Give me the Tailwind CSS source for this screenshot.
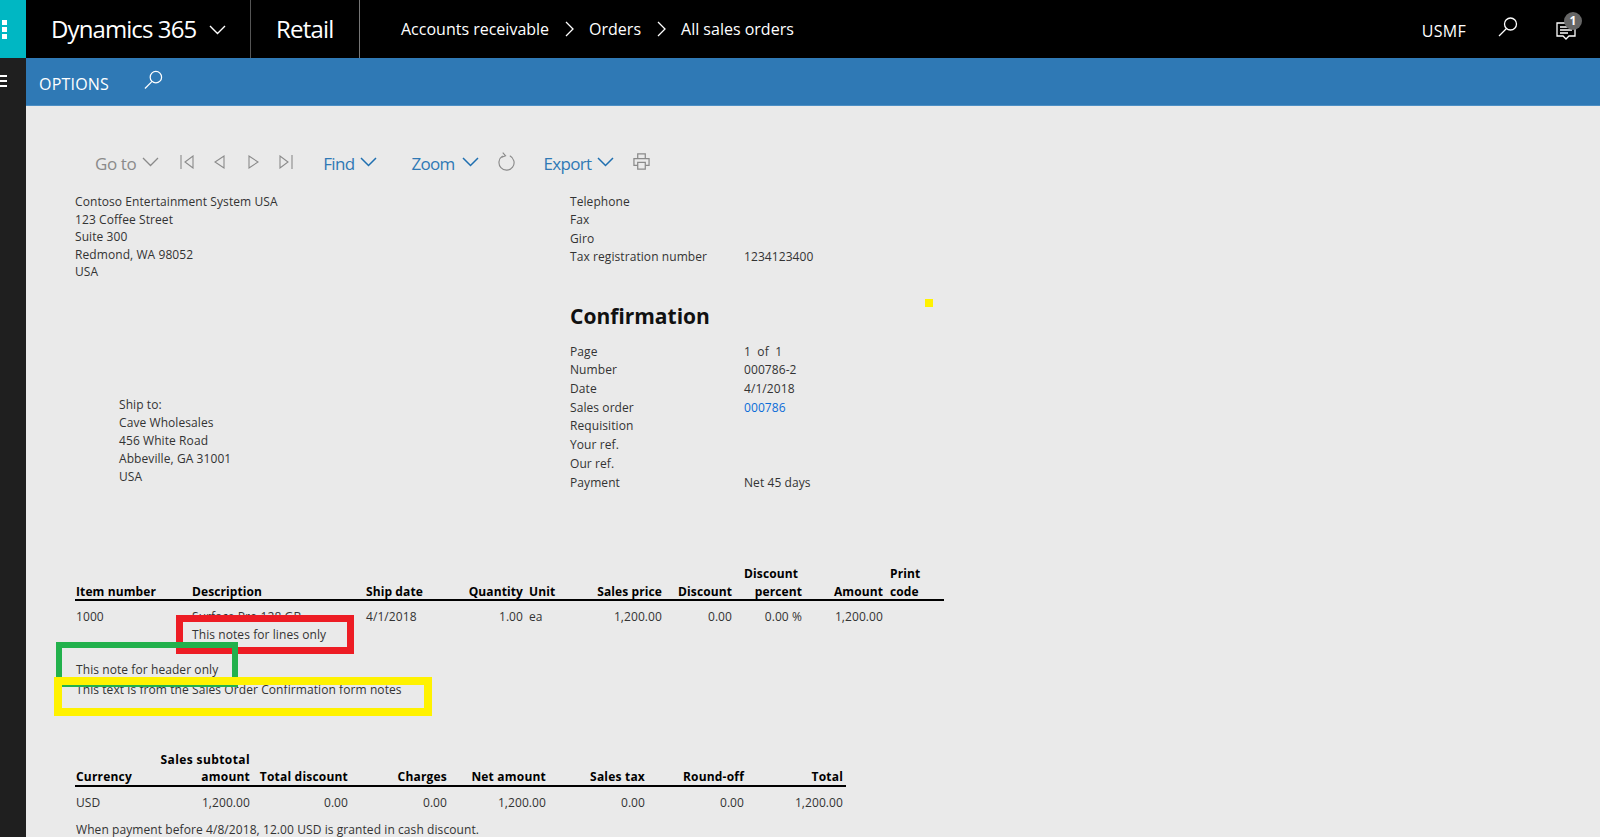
<!DOCTYPE html>
<html lang="en">
<head>
  <meta charset="UTF-8">
  <title>All sales orders</title>
  <script src="https://cdn.jsdelivr.net/npm/@tailwindcss/browser@4"></script>
</head>
<body class="bg-[#eaeaea] font-['Open_Sans',sans-serif] overflow-hidden">
<div class="relative w-[1600px] h-[837px] overflow-hidden flex flex-col">

  <!-- top bar -->
  <header class="h-[58px] bg-black text-white flex items-stretch shrink-0">
    <div class="w-[26px] bg-[#00b7c3] flex flex-col items-end justify-center gap-[2px] pr-[19px] pl-[2px]">
      <span class="w-[5px] h-[5px] bg-white"></span>
      <span class="w-[5px] h-[5px] bg-white"></span>
      <span class="w-[5px] h-[5px] bg-white"></span>
    </div>
    <div class="w-[225px] border-r border-[#555] flex items-center pl-[25px]">
      <span class="text-[24px] tracking-[-0.9px]">Dynamics 365</span>
      <svg class="ml-[13px] mt-[2px]" width="17" height="10" viewBox="0 0 17 10" fill="none" stroke="#fff" stroke-width="1.4"><path d="M1 1l7.500 7.500L16 1"/></svg>
    </div>
    <div class="w-[109px] border-r border-[#777] flex items-center pl-[25px] text-[24px] tracking-[-0.8px]">Retail</div>
    <nav class="flex items-center pl-[41px] text-[16px]">
      <span>Accounts receivable</span>
      <svg class="ml-[16px] mr-[15px]" width="9" height="16" viewBox="0 0 9 16" fill="none" stroke="#fff" stroke-width="1.3"><path d="M1 1l7 7-7 7"/></svg>
      <span>Orders</span>
      <svg class="ml-[16px] mr-[15px]" width="9" height="16" viewBox="0 0 9 16" fill="none" stroke="#fff" stroke-width="1.3"><path d="M1 1l7 7-7 7"/></svg>
      <span>All sales orders</span>
    </nav>
    <div class="ml-auto flex items-center">
      <span class="text-[16px] tracking-[0.3px] mt-[3px]">USMF</span>
      <svg class="ml-[32px] mb-[4px]" width="20" height="20" viewBox="0 0 20 20" fill="none" stroke="#fff" stroke-width="1.3"><circle cx="12.500" cy="7" r="6"/><path d="M8.500 11.500L1 19"/></svg>
      <div class="relative ml-[38px] mr-[24px] w-[20px] h-[20px] mt-[4px]">
        <svg width="20" height="20" viewBox="0 0 20 20" fill="none" stroke="#fff" stroke-width="1.3"><path d="M1 2h18v13h-6l-3 3-3-3H1z"/><path d="M4 6h12M4 9h12M4 12h8"/></svg>
        <span class="absolute -top-[9px] left-[8px] w-[18px] h-[18px] rounded-full bg-[#666] text-white text-[12px] font-bold flex items-center justify-center">1</span>
      </div>
    </div>
  </header>

  <div class="flex flex-1 min-h-0">
    <!-- left rail -->
    <aside class="w-[26px] bg-[#1f1f1f] shrink-0 flex flex-col gap-[3px] pt-[17px]">
      <span class="w-[7px] h-[2px] bg-white"></span>
      <span class="w-[7px] h-[2px] bg-white"></span>
      <span class="w-[7px] h-[2px] bg-white"></span>
    </aside>

    <main class="flex-1 min-w-0">
      <!-- action pane -->
      <div class="h-[48px] bg-[#2f79b5] border-b border-[#4d8fc4] text-white flex items-center pl-[13px]">
        <span class="text-[16px] tracking-[0.2px] mt-[5px]">OPTIONS</span>
        <svg class="ml-[35px] mb-[3px]" width="19" height="20" viewBox="0 0 20 20" fill="none" stroke="#fff" stroke-width="1.3"><circle cx="12.500" cy="7" r="6"/><path d="M8.500 11.500L1 19"/></svg>
      </div>

      <!-- report toolbar -->
      <div class="mt-[41px] h-8 flex items-center pl-[69px] text-[17px] tracking-[-0.4px] text-[#8a8a8a] [&>svg]:mb-[3px] [&>span]:mt-[2px]">
        <span>Go to</span>
        <svg class="ml-[6px]" width="17" height="10" viewBox="0 0 17 10" fill="none" stroke="#8a8a8a" stroke-width="1.3"><path d="M1 1l7.500 7.500L16 1"/></svg>
        <svg class="ml-[21px]" width="14" height="14" viewBox="0 0 14 14" fill="none" stroke="#8a8a8a" stroke-width="1.1"><path d="M1 0v14M13 1v12L5 7z"/></svg>
        <svg class="ml-[20px]" width="11" height="14" viewBox="0 0 11 14" fill="none" stroke="#8a8a8a" stroke-width="1.1"><path d="M10 1v12L1 7z"/></svg>
        <svg class="ml-[23px]" width="11" height="14" viewBox="0 0 11 14" fill="none" stroke="#8a8a8a" stroke-width="1.1"><path d="M1 1v12l9-6z"/></svg>
        <svg class="ml-[20px]" width="14" height="14" viewBox="0 0 14 14" fill="none" stroke="#8a8a8a" stroke-width="1.1"><path d="M13 0v14M1 1v12l8-6z"/></svg>
        <span class="ml-[30px] text-[#2f79b5] tracking-[-0.7px]">Find</span>
        <svg class="ml-[6px]" width="17" height="10" viewBox="0 0 17 10" fill="none" stroke="#1f6fb0" stroke-width="1.5"><path d="M1 1l7.500 7.500L16 1"/></svg>
        <span class="ml-[34px] text-[#2f79b5] tracking-[-0.7px]">Zoom</span>
        <svg class="ml-[7px]" width="17" height="10" viewBox="0 0 17 10" fill="none" stroke="#1f6fb0" stroke-width="1.500"><path d="M1 1l7.500 7.500L16 1"/></svg>
        <svg class="ml-[19px]" width="17" height="19" viewBox="0 0 18 20" fill="none" stroke="#8a8a8a" stroke-width="1.2"><path d="M5 4.200a8 8 0 1 0 7.500-.3"/><path d="M5 0.500l3 3.500-4 1.500"/></svg>
        <span class="ml-[29px] text-[#2f79b5] tracking-[-0.7px]">Export</span>
        <svg class="ml-[6px]" width="17" height="10" viewBox="0 0 17 10" fill="none" stroke="#1f6fb0" stroke-width="1.500"><path d="M1 1l7.500 7.500L16 1"/></svg>
        <svg class="ml-[19px]" width="17" height="17" viewBox="0 0 18 18" fill="none" stroke="#8a8a8a" stroke-width="1.300"><path d="M5 6V1h8v5M5 13H1V6h16v7h-4"/><path d="M5 10h8v7H5z"/></svg>
      </div>

      <!-- report body -->
      <div class="pl-[49px] text-[12px] text-[#333] tracking-[0.08px]">
        <div class="mt-[14px] flex">
          <div class="w-[495px] leading-[17.5px]">
            <div>Contoso Entertainment System USA</div>
            <div>123 Coffee Street</div>
            <div>Suite 300</div>
            <div>Redmond, WA 98052</div>
            <div>USA</div>
            <div class="ml-[44px] mt-[115px] leading-[18px]">
              <div>Ship to:</div>
              <div>Cave Wholesales</div>
              <div>456 White Road</div>
              <div>Abbeville, GA 31001</div>
              <div>USA</div>
            </div>
          </div>
          <div>
            <div class="grid grid-cols-[174px_1fr] leading-[18.4px]">
              <div>Telephone</div><div></div>
              <div>Fax</div><div></div>
              <div>Giro</div><div></div>
              <div>Tax registration number</div><div>1234123400</div>
            </div>
            <h1 class="mt-[33px] h-8 leading-8 text-[21px] font-bold text-[#111] tracking-[0px]">Confirmation</h1>
            <div class="mt-[11px] grid grid-cols-[174px_1fr] leading-[18.7px]">
              <div>Page</div><div>1&nbsp; of&nbsp; 1</div>
              <div>Number</div><div>000786-2</div>
              <div>Date</div><div>4/1/2018</div>
              <div>Sales order</div><div class="text-[#0b6cd8]">000786</div>
              <div>Requisition</div><div></div>
              <div>Your ref.</div><div></div>
              <div>Our ref.</div><div></div>
              <div>Payment</div><div>Net 45 days</div>
            </div>
          </div>
        </div>

        <!-- lines -->
        <div class="mt-[72.5px] w-[869px] grid grid-cols-[116px_174px_75px_82px_60px_79px_70px_70px_81px_61px] items-end font-bold text-black leading-[18px] border-b-2 border-black pl-[1px] tracking-[0.1px] [&>div]:-mb-[1.5px]">
          <div>Item number</div>
          <div>Description</div>
          <div>Ship date</div>
          <div class="text-right">Quantity</div>
          <div class="pl-[6px]">Unit</div>
          <div class="text-right">Sales price</div>
          <div class="text-right">Discount</div>
          <div class="text-right"><span class="pr-[4px]">Discount</span><br>percent</div>
          <div class="text-right">Amount</div>
          <div class="pl-[7px]">Print<br>code</div>
        </div>
        <div class="mt-[7px] w-[869px] grid grid-cols-[116px_174px_75px_82px_60px_79px_70px_70px_81px_61px] leading-[18px] pl-[1px]">
          <div>1000</div>
          <div>Surface Pro 128 GB<br>This notes for lines only</div>
          <div>4/1/2018</div>
          <div class="text-right">1.00</div>
          <div class="pl-[6px]">ea</div>
          <div class="text-right">1,200.00</div>
          <div class="text-right">0.00</div>
          <div class="text-right">0.00 %</div>
          <div class="text-right">1,200.00</div>
          <div></div>
        </div>
        <div class="mt-[17px] leading-[18px] pl-[1px]">This note for header only</div>
        <div class="mt-[2px] leading-[18px] pl-[1px]">This text is from the Sales Order Confirmation form notes</div>

        <!-- totals -->
        <div class="mt-[52px] w-[771px] grid grid-cols-[75px_99px_98px_99px_99px_99px_99px_99px] items-end font-bold text-black leading-[17px] border-b-2 border-black pl-[1px] tracking-[0.2px]">
          <div>Currency</div>
          <div class="text-right"><span class="tracking-[0.4px]">Sales subtotal</span><br>amount</div>
          <div class="text-right">Total discount</div>
          <div class="text-right">Charges</div>
          <div class="text-right">Net amount</div>
          <div class="text-right">Sales tax</div>
          <div class="text-right">Round-off</div>
          <div class="text-right">Total</div>
        </div>
        <div class="mt-[7px] w-[771px] grid grid-cols-[75px_99px_98px_99px_99px_99px_99px_99px] leading-[18px] pl-[1px]">
          <div>USD</div>
          <div class="text-right">1,200.00</div>
          <div class="text-right">0.00</div>
          <div class="text-right">0.00</div>
          <div class="text-right">1,200.00</div>
          <div class="text-right">0.00</div>
          <div class="text-right">0.00</div>
          <div class="text-right">1,200.00</div>
        </div>
        <div class="mt-[9px] leading-[18px] pl-[1px]">When payment before 4/8/2018, 12.00 USD is granted in cash discount.</div>
      </div>
    </main>
  </div>

  <!-- hand drawn annotations over the report -->
  <div class="absolute left-[176px] top-[615px] w-[178px] h-[39px] border-[7px] border-[#ed1c24]"></div>
  <div class="absolute left-[56px] top-[642px] w-[182px] h-[45px] border-[6px] border-[#22b14c]"></div>
  <div class="absolute left-[54px] top-[677px] w-[378px] h-[39px] border-[8px] border-[#fff200]"></div>
  <div class="absolute left-[925px] top-[299px] w-[8px] h-[8px] bg-[#fff200]"></div>
</div>
</body>
</html>
